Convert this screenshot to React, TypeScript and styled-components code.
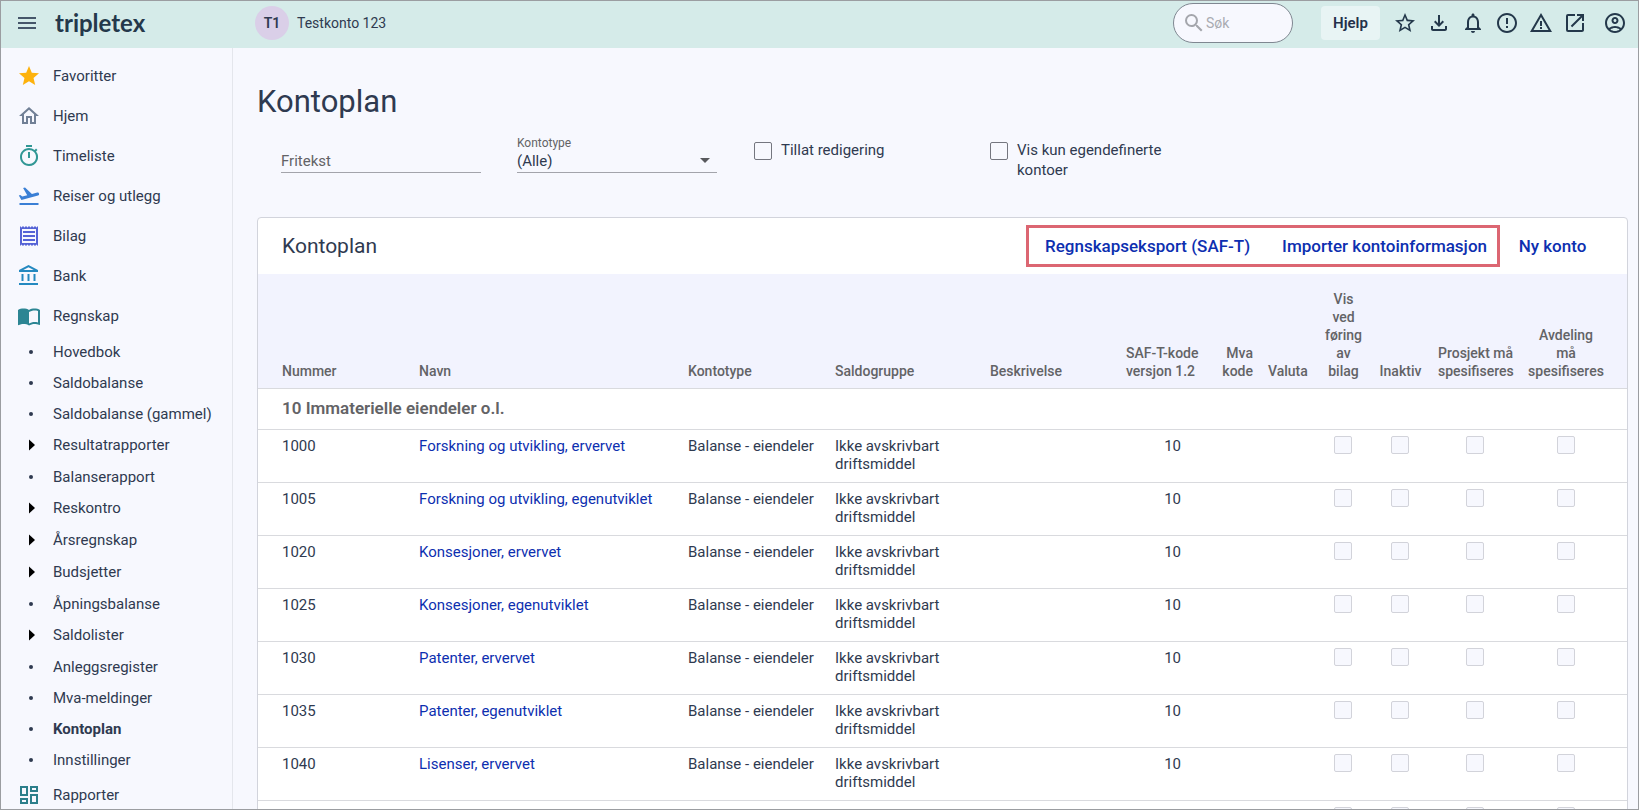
import React from 'react';
import styled, { createGlobalStyle, css } from 'styled-components';
import {
  MdArrowDropDown,
  MdErrorOutline,
  MdImportContacts,
  MdMenu,
  MdOpenInNew,
  MdOutlineAccountBalance,
  MdOutlineAccountCircle,
  MdOutlineDashboard,
  MdOutlineFileDownload,
  MdOutlineFlightTakeoff,
  MdOutlineHome,
  MdOutlineNotifications,
  MdOutlineReceipt,
  MdOutlineTimer,
  MdSearch,
  MdStar,
  MdStarBorder,
  MdWarningAmber,
} from 'react-icons/md';

const ink = '#2f3a50';
const link = '#0d2fb0';
const muted = '#636366';
const line = '#d9dade';
const page = '#f7f8fe';

const GlobalStyle = createGlobalStyle`
  *, *::before, *::after { box-sizing: border-box; }
  body { margin: 0; background: ${page}; }
  body, button, input, select { font-family: Roboto, "Liberation Sans", sans-serif; }
`;

const Shell = styled.div`
  display: flex;
  flex-direction: column;
  height: 100vh;
  overflow: hidden;
  border: 1px solid #9b9da1;
  background: ${page};
  color: ${ink};
  font-size: 15px;
  line-height: 20px;
`;

const TopBar = styled.header`
  display: flex;
  align-items: center;
  flex: none;
  height: 47px;
  padding: 0 6px 4px 14px;
  background: #d5ebe9;
`;

const IconButton = styled.button`
  display: flex;
  align-items: center;
  justify-content: center;
  flex: none;
  width: 34px;
  height: 34px;
  padding: 0;
  border: 0;
  background: none;
  color: #24384b;
  font-size: 24px;
`;

const MenuButton = styled(IconButton)`
  width: 24px;
  color: #46566a;
`;

const BrandArea = styled.div`
  display: flex;
  align-items: center;
  gap: 16px;
  width: 240px;
`;

const Logo = styled.a`
  color: #24384b;
  font-family: Lato, sans-serif;
  font-size: 24px;
  font-weight: 700;
  line-height: 32px;
  text-decoration: none;
`;

const Account = styled.button`
  display: flex;
  align-items: center;
  gap: 8px;
  padding: 0;
  border: 0;
  background: none;
  color: ${ink};
  font-size: 14px;
  line-height: 20px;
`;

const Avatar = styled.span`
  width: 34px;
  border-radius: 50%;
  background: #dacfe8;
  font-weight: 600;
  line-height: 34px;
  text-align: center;
`;

const SearchBox = styled.label`
  display: flex;
  align-items: center;
  width: 120px;
  height: 40px;
  margin: 0 28px 0 auto;
  padding-left: 8px;
  border: 1px solid #7f8791;
  border-radius: 20px;
  background: ${page};
  color: #a4a6ac;
  font-size: 24px;
`;

const SearchInput = styled.input`
  width: 72px;
  padding: 0;
  border: 0;
  outline: 0;
  background: none;
  color: ${ink};
  font-size: 14px;
  &::placeholder { color: #a9abb1; opacity: 1; }
`;

const HelpButton = styled.button`
  width: 59px;
  height: 34px;
  margin-right: 8px;
  padding: 0;
  border: 0;
  border-radius: 4px;
  background: #e8f4f4;
  color: #24304a;
  font-size: 15px;
  font-weight: 600;
`;

const ProfileButton = styled(IconButton)`
  margin-left: 6px;
`;

const Body = styled.div`
  display: flex;
  flex: 1;
  min-height: 0;
`;

const SideBar = styled.nav`
  flex: none;
  width: 232px;
  padding-top: 8px;
  overflow: hidden;
  border-right: 1px solid #e4e6ec;
`;

const NavList = styled.ul`
  margin: 0;
  padding: 0;
  list-style: none;
`;

const NavLink = styled.a<{ $height: number; $active?: boolean }>`
  display: flex;
  align-items: center;
  height: ${(p) => p.$height}px;
  padding-left: 15px;
  color: ${ink};
  font-weight: ${(p) => (p.$active ? 700 : 400)};
  text-decoration: none;
  white-space: nowrap;
`;

const NavIcon = styled.span<{ $color?: string }>`
  display: flex;
  align-items: center;
  justify-content: center;
  width: 26px;
  margin-right: 11px;
  color: ${(p) => p.$color ?? ink};
  font-size: 24px;
`;

const Bullet = styled.span`
  width: 4px;
  height: 4px;
  margin-left: 4px;
  border-radius: 50%;
  background: ${ink};
`;

const Main = styled.main`
  flex: 1;
  min-width: 0;
  padding: 34px 10px 0 24px;
  overflow: hidden;
`;

const PageTitle = styled.h1`
  margin: 0 0 2px;
  font-size: 31px;
  font-weight: 400;
  line-height: 40px;
`;

const Filters = styled.form`
  display: grid;
  grid-template-columns: repeat(4, 200px);
  column-gap: 36px;
  height: 93px;
  padding: 12px 0 0 24px;
`;

const Field = styled.div`
  display: flex;
  flex-direction: column;
  justify-content: flex-end;
  position: relative;
  height: 37px;
  border-bottom: 1px solid #a3a4ab;
`;

const FieldLabel = styled.label`
  color: ${muted};
  font-size: 12px;
  line-height: 14px;
`;

const TextInput = styled.input`
  width: 100%;
  height: 22px;
  padding: 0;
  border: 0;
  outline: 0;
  background: none;
  color: ${ink};
  font-size: 15px;
  &::placeholder { color: ${muted}; opacity: 1; }
`;

const Select = styled.select`
  appearance: none;
  width: 100%;
  height: 22px;
  padding: 0;
  border: 0;
  outline: 0;
  background: none;
  color: ${ink};
  font-size: 15px;
`;

const SelectArrow = styled(MdArrowDropDown)`
  position: absolute;
  right: 0;
  bottom: 0;
  color: #58595d;
  font-size: 24px;
  pointer-events: none;
`;

const CheckLabel = styled.label`
  display: flex;
  align-items: flex-start;
  gap: 9px;
  padding: 4px 0 0 1px;
`;

const box = css`
  appearance: none;
  flex: none;
  width: 18px;
  height: 18px;
  border-radius: 2px;
  background: ${page};
`;

const CheckBox = styled.input`
  ${box}
  margin: 2px 0 0;
  border: 1px solid #74767f;
`;

const RowCheckBox = styled.input`
  ${box}
  display: block;
  margin: 0 auto;
  border: 1px solid #d2d3da;
`;

const Card = styled.section`
  border: 1px solid #d2d4dc;
  border-radius: 4px;
  background: #fff;
`;

const CardHeader = styled.div`
  display: flex;
  align-items: center;
  justify-content: space-between;
  height: 56px;
  padding: 0 22px 0 24px;
`;

const CardTitle = styled.h2`
  margin: 0;
  font-size: 21px;
  font-weight: 400;
  line-height: 28px;
`;

const Actions = styled.div`
  display: flex;
  align-items: center;
`;

const Highlight = styled.div`
  display: flex;
  align-items: center;
  gap: 32px;
  height: 42px;
  padding: 0 10px 0 16px;
  border: 3px solid #dc6672;
`;

const Action = styled.button`
  padding: 0;
  border: 0;
  background: none;
  color: ${link};
  font-size: 17px;
  font-weight: 500;
  line-height: 20px;
  white-space: nowrap;
`;

const NewAccount = styled(Action)`
  width: 105px;
`;

const Table = styled.table`
  width: 100%;
  table-layout: fixed;
  border-collapse: separate;
  border-spacing: 0;
  line-height: 18px;
`;

type Align = 'left' | 'center' | 'right';

const HeadCell = styled.th<{ $align?: Align }>`
  padding: 16px 7px 8px 8px;
  border-bottom: 1px solid ${line};
  background: #f2f3fe;
  color: ${muted};
  font-size: 14px;
  font-weight: 500;
  text-align: ${(p) => p.$align ?? 'left'};
  vertical-align: bottom;
  white-space: pre;
  &:first-child { padding-left: 24px; }
  &:last-child { padding-right: 23px; }
`;

const GroupCell = styled.th`
  height: 41px;
  padding: 0 24px 2px;
  border-bottom: 1px solid ${line};
  color: ${muted};
  font-size: 17px;
  font-weight: 600;
  text-align: left;
`;

const Cell = styled.td`
  height: 53px;
  padding: 7px 8px;
  border-bottom: 1px solid ${line};
  vertical-align: top;
  &:first-child { padding-left: 24px; }
`;

const CodeCell = styled(Cell)`
  padding-right: 27px;
  text-align: right;
`;

const CheckCell = styled(Cell)`
  padding: 6px 8px;
  &:last-child { padding-right: 23px; }
`;

const AccountLink = styled.a`
  color: ${link};
  text-decoration: none;
`;

const mainNav = [
  { label: 'Favoritter', icon: <MdStar />, color: '#fdb20d' },
  { label: 'Hjem', icon: <MdOutlineHome />, color: '#718096' },
  { label: 'Timeliste', icon: <MdOutlineTimer />, color: '#319795' },
  { label: 'Reiser og utlegg', icon: <MdOutlineFlightTakeoff />, color: '#3a7fd5' },
  { label: 'Bilag', icon: <MdOutlineReceipt />, color: '#5563d6' },
  { label: 'Bank', icon: <MdOutlineAccountBalance />, color: '#2489c0' },
  { label: 'Regnskap', icon: <MdImportContacts />, color: '#2c8593' },
];

const subNav: { label: string; group?: boolean; active?: boolean }[] = [
  { label: 'Hovedbok' },
  { label: 'Saldobalanse' },
  { label: 'Saldobalanse (gammel)' },
  { label: 'Resultatrapporter', group: true },
  { label: 'Balanserapport' },
  { label: 'Reskontro', group: true },
  { label: 'Årsregnskap', group: true },
  { label: 'Budsjetter', group: true },
  { label: 'Åpningsbalanse' },
  { label: 'Saldolister', group: true },
  { label: 'Anleggsregister' },
  { label: 'Mva-meldinger' },
  { label: 'Kontoplan', active: true },
  { label: 'Innstillinger' },
];

const columns: { label: string; width: number; align?: Align }[] = [
  { label: 'Nummer', width: 153 },
  { label: 'Navn', width: 269 },
  { label: 'Kontotype', width: 147 },
  { label: 'Saldogruppe', width: 155 },
  { label: 'Beskrivelse', width: 136 },
  { label: 'SAF-T-kode\nversjon 1.2', width: 90 },
  { label: 'Mva\nkode', width: 52, align: 'right' },
  { label: 'Valuta', width: 56 },
  { label: 'Vis\nved\nføring\nav\nbilag', width: 54, align: 'center' },
  { label: 'Inaktiv', width: 60, align: 'center' },
  { label: 'Prosjekt må\nspesifiseres', width: 90, align: 'center' },
  { label: 'Avdeling\nmå\nspesifiseres', width: 107, align: 'center' },
];

const Col = styled.col<{ $width: number }>`
  width: ${(p) => p.$width}px;
`;

const accounts = [
  { number: '1000', name: 'Forskning og utvikling, ervervet' },
  { number: '1005', name: 'Forskning og utvikling, egenutviklet' },
  { number: '1020', name: 'Konsesjoner, ervervet' },
  { number: '1025', name: 'Konsesjoner, egenutviklet' },
  { number: '1030', name: 'Patenter, ervervet' },
  { number: '1035', name: 'Patenter, egenutviklet' },
  { number: '1040', name: 'Lisenser, ervervet' },
];

const flags = ['Vis ved føring av bilag', 'Inaktiv', 'Prosjekt må spesifiseres', 'Avdeling må spesifiseres'];

function FlagCells() {
  return (
    <>
      {flags.map((flag) => (
        <CheckCell key={flag}>
          <RowCheckBox type="checkbox" disabled aria-label={flag} />
        </CheckCell>
      ))}
    </>
  );
}

function Header() {
  return (
    <TopBar>
      <BrandArea>
        <MenuButton aria-label="Meny"><MdMenu /></MenuButton>
        <Logo href="#">tripletex</Logo>
      </BrandArea>
      <Account>
        <Avatar>T1</Avatar>
        Testkonto 123
      </Account>
      <SearchBox>
        <MdSearch />
        <SearchInput type="search" placeholder="Søk" aria-label="Søk" />
      </SearchBox>
      <HelpButton>Hjelp</HelpButton>
      <IconButton aria-label="Favoritter"><MdStarBorder size={24} /></IconButton>
      <IconButton aria-label="Nedlastinger"><MdOutlineFileDownload /></IconButton>
      <IconButton aria-label="Varsler"><MdOutlineNotifications /></IconButton>
      <IconButton aria-label="Informasjon"><MdErrorOutline /></IconButton>
      <IconButton aria-label="Advarsler"><MdWarningAmber /></IconButton>
      <IconButton aria-label="Åpne i nytt vindu"><MdOpenInNew /></IconButton>
      <ProfileButton aria-label="Profil"><MdOutlineAccountCircle /></ProfileButton>
    </TopBar>
  );
}

function Navigation() {
  return (
    <SideBar>
      <NavList>
        {mainNav.map((item) => (
          <li key={item.label}>
            <NavLink href="#" $height={40}>
              <NavIcon $color={item.color}>{item.icon}</NavIcon>
              {item.label}
            </NavLink>
          </li>
        ))}
        {subNav.map((item) => (
          <li key={item.label}>
            <NavLink href="#" $height={item.group ? 32 : 31} $active={item.active}>
              <NavIcon>
                {item.group ? (
                  <svg width="20" height="12" viewBox="0 0 20 12" aria-hidden="true">
                    <path d="M10 0.5 L16 6 L10 11.5 Z" fill="#000" />
                  </svg>
                ) : (
                  <Bullet />
                )}
              </NavIcon>
              {item.label}
            </NavLink>
          </li>
        ))}
        <li>
          <NavLink href="#" $height={40}>
            <NavIcon $color="#2c7f8b"><MdOutlineDashboard /></NavIcon>
            Rapporter
          </NavLink>
        </li>
      </NavList>
    </SideBar>
  );
}

export default function App() {
  return (
    <Shell>
      <GlobalStyle />
      <Header />
      <Body>
        <Navigation />
        <Main>
          <PageTitle>Kontoplan</PageTitle>
          <Filters>
            <Field>
              <TextInput type="text" placeholder="Fritekst" aria-label="Fritekst" />
            </Field>
            <Field>
              <FieldLabel htmlFor="kontotype">Kontotype</FieldLabel>
              <Select id="kontotype">
                <option>(Alle)</option>
              </Select>
              <SelectArrow />
            </Field>
            <CheckLabel>
              <CheckBox type="checkbox" />
              Tillat redigering
            </CheckLabel>
            <CheckLabel>
              <CheckBox type="checkbox" />
              Vis kun egendefinerte kontoer
            </CheckLabel>
          </Filters>
          <Card>
            <CardHeader>
              <CardTitle>Kontoplan</CardTitle>
              <Actions>
                <Highlight>
                  <Action>Regnskapseksport (SAF-T)</Action>
                  <Action>Importer kontoinformasjon</Action>
                </Highlight>
                <NewAccount>Ny konto</NewAccount>
              </Actions>
            </CardHeader>
            <Table>
              <colgroup>
                {columns.map((column) => (
                  <Col key={column.label} $width={column.width} />
                ))}
              </colgroup>
              <thead>
                <tr>
                  {columns.map((column) => (
                    <HeadCell key={column.label} scope="col" $align={column.align}>
                      {column.label}
                    </HeadCell>
                  ))}
                </tr>
              </thead>
              <tbody>
                <tr>
                  <GroupCell colSpan={12} scope="colgroup">10 Immaterielle eiendeler o.l.</GroupCell>
                </tr>
                {accounts.map((account) => (
                  <tr key={account.number}>
                    <Cell>{account.number}</Cell>
                    <Cell><AccountLink href="#">{account.name}</AccountLink></Cell>
                    <Cell>Balanse - eiendeler</Cell>
                    <Cell>Ikke avskrivbart driftsmiddel</Cell>
                    <Cell />
                    <CodeCell>10</CodeCell>
                    <Cell />
                    <Cell />
                    <FlagCells />
                  </tr>
                ))}
                <tr>
                  <Cell colSpan={8} />
                  <FlagCells />
                </tr>
              </tbody>
            </Table>
          </Card>
        </Main>
      </Body>
    </Shell>
  );
}
